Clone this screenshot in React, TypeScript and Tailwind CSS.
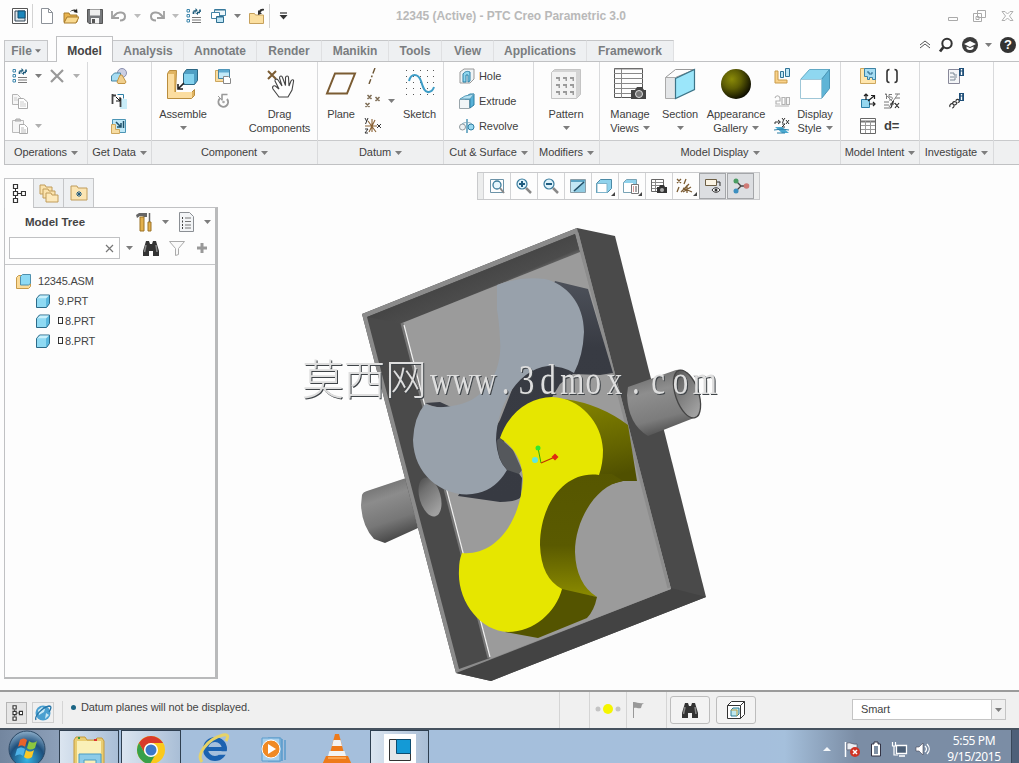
import type { ReactNode } from "react";

type IcoProps = { w?: number; h?: number; className?: string; children: ReactNode };

function Ico({ w = 16, h = 16, className = "", children }: IcoProps) {
  return (
    <svg width={w} height={h} viewBox={`0 0 ${w} ${h}`} fill="none" className={`shrink-0 ${className}`}>
      {children}
    </svg>
  );
}

function Arrow({ className = "" }: { className?: string }) {
  return (
    <svg width="7" height="4" viewBox="0 0 7 4" className={`shrink-0 ${className}`}>
      <path d="M0 0h7L3.5 4z" fill="#7d7d7d" />
    </svg>
  );
}

/* ---------- small icons ---------- */

const Regenerate = () => (
  <Ico>
    <path d="M1 1.500h2.500v2.500H1zM1 6.500h2.500v2.500H1zM1 11.500h2.500v2.500H1z" stroke="#3f87ad" />
    <path d="M6 9.500h9M6 12h9M6 14.500h9" stroke="#777" />
    <path d="M7.500 6V3.500M14 1.500V4M11 4.500h3M7.500 3h3" stroke="#1d5c7c" strokeWidth="1.700" />
    <path d="M9.500 0l3 3-3 3zM12 2l-3.500 2.500L12 7z" fill="#1d5c7c" />
  </Ico>
);

const NewFile = () => (
  <Ico>
    <path d="M2.500.5h7l4 4v11h-11z" fill="#fff" stroke="#8d9299" />
    <path d="M9.500.5v4h4" stroke="#8d9299" />
  </Ico>
);

const OpenFolder = () => (
  <Ico>
    <path d="M1 14V5h5l1 2h7v7z" fill="#e9b44f" stroke="#a77a2b" />
    <path d="M1 15l3-6h12l-3 6z" fill="#f9d98f" stroke="#a77a2b" />
    <path d="M7 4c1-2 4-3 6-2l1-1.500.5 4.500-4-1 1-1C10 2.500 8.500 3 7 4z" fill="#222" />
  </Ico>
);

const Save = () => (
  <Ico>
    <path d="M.5 1.500h15v14H2l-1.500-1.500z" fill="#77797c" stroke="#555" />
    <path d="M3 1.500h10v6H3z" fill="#eee" />
    <path d="M4 10h8v5.500H4z" fill="#f4f4f4" />
    <path d="M5 11h3v4H5z" fill="#555" />
  </Ico>
);

const Undo = ({ flip = false }: { flip?: boolean }) => (
  <Ico className={flip ? "-scale-x-100" : ""}>
    <path d="M4 7c3-4 10-3 10 1.500 0 3-2 4-5 4" stroke="#a0a0a0" strokeWidth="2" />
    <path d="M1 3v7h7" stroke="#a0a0a0" strokeWidth="1.800" />
    <path d="M1 10l4-4" stroke="#a0a0a0" strokeWidth="2" />
  </Ico>
);

const Windows = () => (
  <Ico>
    <path d="M4.500 1.500h11v6h-11z" fill="#eef7fb" stroke="#4384a6" />
    <path d="M1.500 4.500h8v6h-8z" fill="#fff" stroke="#4384a6" />
    <path d="M6.500 8.500h7v6h-7z" fill="#bfe5f5" stroke="#2e6e90" />
    <path d="M5 2h10M7 9h6" stroke="#2e6e90" />
  </Ico>
);

const CloseFolder = () => (
  <Ico>
    <path d="M.5 15.500V5.500h5l1 1.500h8v8.500z" fill="#fbdfa0" stroke="#c6a15d" />
    <path d="M15 1c-3-.5-4 .5-5 2l-1-1v5l4-1.500-1.500-1c1-1.500 2-2 3.500-2z" fill="#333" />
  </Ico>
);

const Copy = () => (
  <Ico>
    <path d="M.5 1.500h5l3 3v7h-8z" fill="#f6f6f6" stroke="#b5b5b5" />
    <path d="M6.500 5.500h5l4 3.500v6.500h-9z" fill="#fff" stroke="#aaa" />
    <path d="M8 9h4M8 11h6M8 13h6M2 5h3M2 7h4" stroke="#ccc" />
  </Ico>
);

const Paste = () => (
  <Ico>
    <path d="M.5 2.500h11v12H.5z" fill="#f6f6f6" stroke="#bbb" />
    <path d="M3 3l1-2h4l1 2z" fill="#ccc" stroke="#aaa" />
    <path d="M7.500 6.500h5l3 3v6h-8z" fill="#fff" stroke="#aaa" />
    <path d="M9 10h3M9 12h5M9 14h5" stroke="#bbb" />
  </Ico>
);

const Cross = () => (
  <Ico>
    <path d="M2 2l12 12M14 2L2 14" stroke="#999" strokeWidth="2.200" />
  </Ico>
);

const UserFeature = () => (
  <Ico>
    <circle cx="11" cy="5" r="4.500" fill="#ccd0e4" stroke="#8a8fae" />
    <path d="M.5 8l3-3h6v6l-2 2h-7z" fill="#a6dcf2" stroke="#4686a4" />
    <path d="M6 14l3-7h2l4 7-1 1.500H7z" fill="#f0cf8d" stroke="#c29544" />
  </Ico>
);

const CopyGeom = () => (
  <Ico>
    <path d="M9 6h7v10H9z" fill="#c9edf9" />
    <path d="M1.500 1v10M1 2.500h4M9.500 5v9" stroke="#444" strokeWidth="1.800" />
    <path d="M6.500 1.500h6v4" stroke="#2b7ea6" />
    <path d="M5 4l4 4M9 4v4H5" stroke="#111" />
  </Ico>
);

const Shrinkwrap = () => (
  <Ico>
    <path d="M1.500 1.500h13v13h-13z" fill="#bfe8f7" stroke="#4c95b5" />
    <path d="M5 4l5 5M10 5v4H6M12.500 3v7" stroke="#1f506a" strokeWidth="1.500" />
    <path d="M.5 6.500v9h8v-4h-4v-5z" fill="#f6dca2" stroke="#cda75e" />
  </Ico>
);

const CreateComp = () => (
  <Ico>
    <path d="M.5 2.500h3v8h7v3H.5z" fill="#f9dca0" stroke="#cda75e" />
    <path d="M3.500 1.500h11v9h-11z" fill="#c3e9f7" stroke="#4384a6" />
    <path d="M4 1.500h10v3H4z" fill="#5fabd0" />
    <path d="M8.500 8.500h5l2 2v5h-7z" fill="#fff" stroke="#888" />
  </Ico>
);

const Repeat = () => (
  <Ico>
    <path d="M5 5.500A4.800 4.800 0 1 0 12 6" stroke="#999" strokeWidth="2" />
    <path d="M6.500 1.500h6M7 1.500v6" stroke="#999" strokeWidth="1.600" />
    <path d="M7 7L3 3" stroke="#999" />
    <circle cx="8.500" cy="9" r="1.300" fill="#aaa" />
  </Ico>
);

const Axis = () => (
  <Ico>
    <path d="M11 0L5 16" stroke="#6b5433" strokeWidth="1.400" strokeDasharray="6 2 2 2" />
  </Ico>
);

const Points = () => (
  <Ico w={18}>
    <path d="M3.500 2l4 4M7.500 2l-4 4M11.500 4l4 4M15.500 4l-4 4M1.500 10l4 4M5.500 10l-4 4" stroke="#7b6a52" strokeWidth="1.500" />
  </Ico>
);

const Csys = () => (
  <Ico w={18}>
    <path d="M1 8h12M5 14l6-12M4 3l8 11M8 1v13" stroke="#8a6234" strokeWidth="1.100" />
    <path d="M1 0l1.500 3M4 0L1.500 6M1 11h3l-3 4h3M13 6l4 4M17 6l-4 4" stroke="#333" />
  </Ico>
);

const Hole = () => (
  <Ico>
    <path d="M1 4l4-3h10v10l-4 4H1z" fill="#eef3f5" stroke="#999" />
    <path d="M4 14V6c2-3 5-3 7-2v9l-2 1V7H7v7z" fill="#8fd6ee" stroke="#2a7fa5" />
  </Ico>
);

const Extrude = () => (
  <Ico>
    <path d="M.5 6.500h10v9H.5z" fill="#f1f5f7" stroke="#9aa5ab" />
    <path d="M6 4l5-3h4v11l-4 3V6H6z" fill="#58b2d8" stroke="#2d7ea3" />
    <path d="M1 6l5-3 9-2-4 5z" fill="#b7e2f2" stroke="#5c9fbd" />
  </Ico>
);

const Revolve = () => (
  <Ico>
    <circle cx="3.500" cy="9" r="3" fill="#edf1f3" stroke="#8e979c" />
    <circle cx="12" cy="9" r="3" fill="#9ad9f0" stroke="#2f7fa5" />
    <path d="M8 1v14" stroke="#3187ad" strokeWidth="1.300" />
    <path d="M3 6c2-2 8-2 10 0" stroke="#7fa6b8" />
  </Ico>
);

const ExplodeView = () => (
  <Ico>
    <path d="M1 3h3v9h9v3H1z" fill="#f9d28b" stroke="#c99b48" />
    <path d="M6.500 3.500h3v6h-3zM11.500.5h4v8h-4z" fill="#bfe6f5" stroke="#2f7396" />
  </Ico>
);

const SwitchExplode = () => (
  <Ico>
    <path d="M1 5c1-3 4-3 5 0v3H2v3h4M8 4.500h3v7H8zM12.500 4.500h3v7h-3zM1 13h14" stroke="#b4b4b4" strokeWidth="1.200" />
  </Ico>
);

const EditPosition = () => (
  <Ico>
    <path d="M1 6V4h5M4 2l2.500 2L4 6" stroke="#333" />
    <path d="M8 0l1.500 2L11 0M9.500 2L8.500 5M12 2l3 4M15 2l-3 4M8 6h3l-3 3h3" stroke="#333" />
    <path d="M1 9h7l7 6H8z" fill="#4ba9d0" />
    <path d="M0 12l8-1 7 1M3 15h8" stroke="#2b7ea6" strokeWidth="1.200" />
  </Ico>
);

const CompInterface = () => (
  <Ico>
    <path d="M.5.5h15v15H.5z" fill="#ffe6ad" stroke="#cda75e" />
    <path d="M4.500.5h11v11h-3v-2h-3v2h-2v-3h-3z" fill="#a5dcf2" stroke="#3d83a5" />
    <path d="M7 4h2v2h3V4" stroke="#26658a" />
  </Ico>
);

const Brackets = () => (
  <Ico>
    <path d="M5.500 1.500C3 1.500 3 3 3 4v8c0 1 0 2.500 2.500 2.500M10.500 1.500C13 1.500 13 3 13 4v8c0 1 0 2.500-2.500 2.500" stroke="#333" strokeWidth="1.600" />
  </Ico>
);

const PublishGeom = () => (
  <Ico>
    <path d="M1.500 6.500h8v8h-8z" fill="#95d7ef" stroke="#2b7ea6" />
    <path d="M6 7V1M4 3l2-2 2 2M8 8l6-5M11 2.500h3.500V6M9 11h6M13 9l2 2-2 2" stroke="#222" strokeWidth="1.200" />
  </Ico>
);

const Parameters = () => (
  <Ico>
    <path d="M1 1h1.500v5M8 1.500H5V4h2c2 0 2 3-1 3H5M11 1h5M11 5h5M0 9h5M0 12h5M0 15h6" stroke="#777" />
    <path d="M1 1l14 14M14 1L5 14" stroke="#888" />
    <path d="M6 15c3 0 1-7 4-7M6 11h4M11 10l4 5M15 10l-4 5" stroke="#333" strokeWidth="1.200" />
  </Ico>
);

const FamilyTable = () => (
  <Ico>
    <path d="M.5.5h15v15H.5z" fill="#fff" stroke="#666" />
    <path d="M1 3.500h14" stroke="#777" strokeWidth="2" />
    <path d="M1 7.500h14M1 11.500h14M5.500 3v12M10.500 3v12" stroke="#999" />
  </Ico>
);

const InfoReport = () => (
  <Ico>
    <path d="M.5 1.500h11v14H.5z" fill="#f3f5f7" stroke="#889" />
    <path d="M2 5h4v2h3M2 9h7M2 12h5v-2" stroke="#7a8894" />
    <path d="M11 0h5v8h-5z" fill="#1f4f78" />
    <path d="M13.500 1v1.500M13.500 3.500V7" stroke="#fff" strokeWidth="1.400" />
  </Ico>
);

const ChainInfo = () => (
  <Ico>
    <path d="M2 14c-1-2 1-4 3-3s1 4-1 4M5 11c-1-2 1-3 3-2s0 3-2 3M8 8c0-2 2-2 3-1s0 3-1 2" stroke="#333" strokeWidth="1.200" />
    <path d="M11 0h5v8h-5z" fill="#1f4f78" />
    <path d="M13.500 1v1.500M13.500 3.500V7" stroke="#fff" strokeWidth="1.400" />
  </Ico>
);

const TreeNodes = () => (
  <Ico w={15} h={19}>
    <path d="M2.500.5h4v4h-4zM2.500 7.500h4v4h-4zM2.500 14.500h4v4h-4zM10.500 7.500h4v4h-4z" fill="#fff" stroke="#333" strokeWidth="1.200" />
    <path d="M7 9.500h3M4.500 5v2M4.500 12v2" stroke="#333" />
  </Ico>
);

const Binoculars = () => (
  <Ico w={18} h={17}>
    <path d="M4 1h3l1 3h2l1-3h3l3 10v5h-6v-5H7v5H1v-5z" fill="#333" />
    <path d="M4 5l-1.500 7M14 5l1 7" stroke="#888" strokeWidth="1.500" />
  </Ico>
);

const Part = () => (
  <Ico w={14} h={14}>
    <path d="M.5 4.500l3-3.500h10v8.500l-3 4H.5z" fill="#5cb9de" stroke="#2c6a88" />
    <path d="M1 4.500h9v8.500H1z" fill="#8fdaf3" />
    <path d="M1 4.500L4 1.500h9l-3 3z" fill="#c9f0fb" />
  </Ico>
);

const Asm = () => (
  <Ico w={15} h={15}>
    <path d="M.5 3.500l2-2h4v8h8v3l-2 2H.5z" fill="#fbdb98" stroke="#c79a49" />
    <path d="M4.500 2.500l2-2h8v9l-2 1.500h-8z" fill="#8edaf4" stroke="#4f90ae" />
  </Ico>
);

/* ---------- large icons ---------- */

const AssembleIcon = () => (
  <Ico w={34} h={32}>
    <path d="M1.500 5.500l2-3h7l-1 22h16l3-3v6l-3 3h-24z" fill="#e0b462" stroke="#b98d3e" />
    <path d="M2 6h6v18h18v6H2z" fill="#fbdda0" />
    <path d="M17.500 5.500l3-4h11v11l-3 4h-11z" fill="#4f9fc4" stroke="#2b6683" />
    <path d="M18 6h10v10H18z" fill="#84d2ee" />
    <path d="M18 15l-6 6M12 16v5h5" stroke="#222" strokeWidth="1.600" />
  </Ico>
);

const HandIcon = () => (
  <Ico w={32} h={32}>
    <path d="M4 3l8 8M12 3l-8 8" stroke="#7b5c33" strokeWidth="2" />
    <path
      d="M15 29L9 21C7.500 18 10.500 17 12 18.500L15 21l-4-8c-.5-2 2-2.500 3-1l4 6-2.500-8c0-2.500 2.500-2.500 3-.5l3 8V9.500c.5-2 3-2 3 0l.5 8.500 2-5c1-2 3-1.500 2.500.5L28 22l-4 7z"
      fill="#fff"
      stroke="#444"
      strokeWidth="1.100"
    />
  </Ico>
);

const PlaneIcon = () => (
  <Ico w={32} h={32}>
    <path d="M10 5.500h20l-8 20H2z" stroke="#7b5c33" strokeWidth="2" />
  </Ico>
);

const SketchIcon = () => (
  <Ico w={32} h={32}>
    {[2, 8, 14, 20, 26].map((y) => (
      <path key={y} d={`M2 ${y}.5h1m6 0h1m6 0h1m6 0h1m5 0h1`} stroke="#555" />
    ))}
    <path d="M5 13c2-8 9-8 12 0 2 7 4 12 8 11 3-.5 4-2 5-5" stroke="#3d9cc6" strokeWidth="2" />
  </Ico>
);

const PatternIcon = () => (
  <Ico w={32} h={32}>
    <path d="M1.500 4.500l3-3h26v25l-4 4h-25z" fill="#d4d4d4" stroke="#c4c4c4" />
    <path d="M2 4h24v26H2z" fill="#f2f2f2" />
    {[9, 16, 23].map((y) =>
      [6, 13, 20].map((x) => <path key={`${x}-${y}`} d={`M${x} ${y}h4v4h-1.500v-2h-2.500z`} fill="#9a9a9a" />)
    )}
  </Ico>
);

const ManageIcon = () => (
  <Ico w={34} h={32}>
    <path d="M1.500.5h28v29h-28z" fill="#fdfdfd" stroke="#555" />
    <path d="M1 1h29M1 5.500h29M1 10.500h29M1 15.500h29M1 20.500h29M1 25.500h29M8.500 1v29" stroke="#888" />
    <path d="M18 22h4l2-3h5l2 3h2v9H18z" fill="#444" />
    <circle cx="26" cy="26" r="3.500" fill="#777" stroke="#ddd" />
  </Ico>
);

const SectionIcon = () => (
  <Ico w={32} h={32}>
    <path d="M1.500 9.500l10-8h19l-19 8z" fill="#fdfdfd" stroke="#999" />
    <path d="M1.500 9.500h10v21h-10z" fill="#e4e6e8" stroke="#aaa" />
    <path d="M11.500 10.500l19-9v20l-19 9z" fill="#9be6fa" stroke="#3c7488" strokeWidth="1.200" />
  </Ico>
);

const BallIcon = () => (
  <Ico w={32} h={32}>
    <defs>
      <radialGradient id="ball" cx="0.360" cy="0.340" r="0.700">
        <stop offset="0" stopColor="#8a8a08" />
        <stop offset="0.450" stopColor="#5e5e04" />
        <stop offset="1" stopColor="#0c0c00" />
      </radialGradient>
    </defs>
    <circle cx="16" cy="16" r="15" fill="url(#ball)" />
  </Ico>
);

const StyleIcon = () => (
  <Ico w={32} h={32}>
    <path d="M1.500 11.500l9-10h20l-8 10z" fill="#8fd7f0" stroke="#62aac6" />
    <path d="M22.500 11.500l8-10v19l-8 10z" fill="#5fb4d6" stroke="#4a97b8" />
    <path d="M1.500 11.500h21v19h-21z" fill="#fff" stroke="#9fc7d8" />
  </Ico>
);

/* ---------- ribbon ---------- */

function BigButton({ icon, lines, width, arrow }: { icon: ReactNode; lines: string[]; width: string; arrow?: "below" | "inline" }) {
  return (
    <div className={`flex shrink-0 flex-col items-center pt-[6px] ${width}`}>
      {icon}
      <div className="mt-[7px] text-center leading-[14px] whitespace-nowrap">
        {lines.map((line, i) => (
          <div key={line} className="flex items-center justify-center gap-1">
            <span>{line}</span>
            {arrow === "inline" && i === lines.length - 1 && <Arrow />}
          </div>
        ))}
      </div>
      {arrow === "below" && <Arrow className="mt-[5px]" />}
    </div>
  );
}

function Column({ children, className = "" }: { children: ReactNode; className?: string }) {
  return <div className={`flex shrink-0 flex-col pt-[1px] *:h-[25px] *:shrink-0 ${className}`}>{children}</div>;
}

function Cell({ children, className = "" }: { children?: ReactNode; className?: string }) {
  return <div className={`flex items-center ${className}`}>{children}</div>;
}

function Group({ label, width, children }: { label: string; width: string; children: ReactNode }) {
  return (
    <div className={`flex shrink-0 flex-col border-r border-[#d9dadc] ${width}`}>
      <div className="flex h-[78px]">{children}</div>
      <div className="flex h-[24px] items-center justify-center gap-1 border-t border-[#c9cacc] bg-[#eff0f1] whitespace-nowrap">
        <span>{label}</span>
        <Arrow />
      </div>
    </div>
  );
}

const tabs = [
  { name: "Analysis", width: "w-[71px]" },
  { name: "Annotate", width: "w-[73px]" },
  { name: "Render", width: "w-[65px]" },
  { name: "Manikin", width: "w-[67px]" },
  { name: "Tools", width: "w-[53px]" },
  { name: "View", width: "w-[52px]" },
  { name: "Applications", width: "w-[93px]" },
  { name: "Framework", width: "w-[87px]" },
];

function TitleBar() {
  return (
    <div className="flex h-[36px] items-start">
      <div className="flex h-[32px] w-[380px] shrink-0 items-center pl-[12px]">
        <Ico>
          <path d="M.5.5h15v15H.5z" fill="#fff" stroke="#555" />
          <path d="M3 3h10v10H3z" fill="#d9e3e9" stroke="#345" />
          <path d="M6 3h7v7H6z" fill="#1b86bb" stroke="#124e70" />
        </Ico>
        <div className="ml-[4px] h-[24px] w-px bg-[#d3d3d3]" />
        <div className="ml-[6px] flex items-center gap-[8px]">
          <NewFile />
          <OpenFolder />
          <Save />
          <Undo />
        </div>
        <Arrow className="ml-[7px] opacity-50" />
        <div className="ml-[8px] flex items-center">
          <Undo flip />
          <Arrow className="ml-[7px] opacity-50" />
          <div className="ml-[7px]"><Regenerate /></div>
          <div className="ml-[8px]"><Windows /></div>
        </div>
        <Arrow className="ml-[8px]" />
        <div className="ml-[8px]"><CloseFolder /></div>
        <div className="ml-[4px] h-[24px] w-px bg-[#d3d3d3]" />
        <Ico w={9} h={8} className="ml-[9px]">
          <path d="M1 1h7" stroke="#333" strokeWidth="1.200" />
          <path d="M.5 3h8L4.500 7.500z" fill="#333" />
        </Ico>
      </div>
      <div className="flex h-[32px] w-[262px] items-center justify-center text-[12px] font-bold tracking-[-0.04px] text-[#b9b9b9] whitespace-nowrap">
        12345 (Active) - PTC Creo Parametric 3.0
      </div>
      <div className="ml-auto flex h-[32px] items-center gap-[15px] pr-[5px]">
        <Ico w={10} h={12}><path d="M.5 7.500h9v3h-9z" stroke="#aaa" /></Ico>
        <Ico w={13} h={12}>
          <path d="M4.500.5h8v7h-8zM.5 3.500h8v8h-8z" fill="#fff" stroke="#aaa" />
          <path d="M3 6.500h3v3H3z" stroke="#aaa" />
        </Ico>
        <Ico w={13} h={12}>
          <path d="M1 1.500h3l2.500 2.500L9 1.500h3L8.500 6l3.500 4.500H9L6.500 8 4 10.500H1L4.500 6z" stroke="#b0b0b0" />
        </Ico>
      </div>
    </div>
  );
}

function TabStrip() {
  return (
    <div className="flex h-[25px] items-end pl-[4px] text-[12px] font-bold text-[#7a7d80]">
      <div className="flex h-[21px] w-[44px] items-center justify-center gap-[3px] border border-b-0 border-[#c5c6c8] bg-[#eef0f2]">
        <span>File</span>
        <svg width="6" height="4" viewBox="0 0 7 4">
          <path d="M0 0h7L3.500 4z" fill="#777" />
        </svg>
      </div>
      <div className="z-10 ml-[8px] -mb-px flex h-[26px] w-[57px] items-center justify-center border border-b-0 border-[#c0c1c3] bg-[#fdfdfd] pt-[3px] text-[#444]">
        Model
      </div>
      {tabs.map((tab) => (
        <div
          key={tab.name}
          className={`flex h-[21px] items-center justify-center border-t border-r border-t-[#c5c6c8] border-r-[#dfe0e2] bg-[#eef0f2] ${tab.width}`}
        >
          {tab.name}
        </div>
      ))}
      <div className="ml-auto flex h-[33px] items-center pr-[3px]">
        <Ico w={12} h={9}><path d="M1 5l5-4 5 4M1 8l5-4 5 4" stroke="#555" /></Ico>
        <Ico className="ml-[7px]">
          <circle cx="9" cy="6.500" r="4.700" stroke="#333" strokeWidth="2" />
          <path d="M5.500 10L2 14.500" stroke="#333" strokeWidth="2.800" />
        </Ico>
        <Ico className="ml-[8px]">
          <circle cx="8" cy="8" r="8" fill="#3b3b3b" />
          <path d="M2 7l6-3 6 3-6 3zM4.500 9.500v2c2 2 5 2 7 0v-2L8 11z" fill="#fff" />
        </Ico>
        <Arrow className="ml-[7px]" />
        <div className="ml-[8px] flex h-[16px] w-[16px] items-center justify-center rounded-full bg-[#333] text-[13px] leading-none font-bold text-white">?</div>
      </div>
    </div>
  );
}

function Ribbon() {
  return (
    <div className="ml-[4px] flex h-[104px] border-y border-l border-[#c0c1c3] text-[11px] tracking-[-0.08px] text-[#3f3f3f]">
      <Group label="Operations" width="w-[83px]">
        <Column className="pl-[7px]">
          <Cell>
            <Regenerate />
            <Arrow className="ml-[7px]" />
            <div className="ml-[7px]"><Cross /></div>
            <Arrow className="ml-[8px] opacity-60" />
          </Cell>
          <Cell><Copy /></Cell>
          <Cell><Paste /><Arrow className="ml-[7px] opacity-60" /></Cell>
        </Column>
      </Group>
      <Group label="Get Data" width="w-[64px]">
        <Column className="pl-[23px]">
          <Cell><UserFeature /></Cell>
          <Cell><CopyGeom /></Cell>
          <Cell><Shrinkwrap /></Cell>
        </Column>
      </Group>
      <Group label="Component" width="w-[166px]">
        <BigButton icon={<AssembleIcon />} lines={["Assemble"]} width="w-[62px]" arrow="below" />
        <Column className="ml-[1px]">
          <Cell><CreateComp /></Cell>
          <Cell><Repeat /></Cell>
        </Column>
        <div className="mt-[6px] ml-[9px] h-[54px] w-px bg-[#dcdcdc]" />
        <BigButton icon={<HandIcon />} lines={["Drag", "Components"]} width="w-[79px]" />
      </Group>
      <Group label="Datum" width="w-[126px]">
        <BigButton icon={<PlaneIcon />} lines={["Plane"]} width="w-[46px]" />
        <Column className="w-[18px]">
          <Cell><Axis /></Cell>
          <Cell><Points /></Cell>
          <Cell><Csys /></Cell>
        </Column>
        <Arrow className="mt-[37px] ml-[6px]" />
        <BigButton icon={<SketchIcon />} lines={["Sketch"]} width="w-[49px]" />
      </Group>
      <Group label="Cut & Surface" width="w-[90px]">
        <Column className="pl-[15px] *:pt-[1px]">
          <Cell className="gap-[4px]"><Hole />Hole</Cell>
          <Cell className="gap-[4px]"><Extrude />Extrude</Cell>
          <Cell className="gap-[4px]"><Revolve />Revolve</Cell>
        </Column>
      </Group>
      <Group label="Modifiers" width="w-[66px]">
        <BigButton icon={<PatternIcon />} lines={["Pattern"]} width="w-[64px]" arrow="below" />
      </Group>
      <Group label="Model Display" width="w-[241px]">
        <BigButton icon={<ManageIcon />} lines={["Manage", "Views"]} width="w-[60px]" arrow="inline" />
        <BigButton icon={<SectionIcon />} lines={["Section"]} width="w-[40px]" arrow="below" />
        <BigButton icon={<BallIcon />} lines={["Appearance", "Gallery"]} width="w-[72px]" arrow="inline" />
        <Column className="ml-[2px]">
          <Cell><ExplodeView /></Cell>
          <Cell><SwitchExplode /></Cell>
          <Cell><EditPosition /></Cell>
        </Column>
        <BigButton icon={<StyleIcon />} lines={["Display", "Style"]} width="w-[50px]" arrow="inline" />
      </Group>
      <Group label="Model Intent" width="w-[79px]">
        <Column className="ml-[19px]">
          <Cell><CompInterface /></Cell>
          <Cell><PublishGeom /></Cell>
          <Cell><FamilyTable /></Cell>
        </Column>
        <Column className="ml-[8px]">
          <Cell><Brackets /></Cell>
          <Cell><Parameters /></Cell>
          <Cell className="text-[13px] font-bold">d=</Cell>
        </Column>
      </Group>
      <Group label="Investigate" width="w-[74px]">
        <Column className="ml-[28px]">
          <Cell><InfoReport /></Cell>
          <Cell><ChainInfo /></Cell>
        </Column>
      </Group>
      <div className="flex flex-1 flex-col justify-end">
        <div className="h-[24px] border-t border-[#c9cacc] bg-[#eff0f1]" />
      </div>
    </div>
  );
}

/* ---------- model tree ---------- */

const parts = [
  { name: "9.PRT", placed: true },
  { name: "8.PRT", placed: false },
  { name: "8.PRT", placed: false },
];

function ModelTree() {
  return (
    <div className="flex w-[218px] shrink-0 flex-col pt-[13px] pl-[4px] text-[11px] text-[#444]">
      <div className="flex h-[29px]">
        <div className="z-10 -mb-px flex w-[30px] items-center justify-center border border-b-0 border-[#c5c6c8] bg-[#fdfdfd] pr-[2px]">
          <TreeNodes />
        </div>
        <div className="flex w-[30px] items-center justify-center border-t border-r border-[#c5c6c8] bg-[#eef0f2]">
          <Ico w={20} h={20}>
            <path d="M1 2h5l1 2h6v7H1z" fill="#fbe3ad" stroke="#c09c5a" />
            <path d="M4 6h5l1 2h6v7H4z" fill="#fbe3ad" stroke="#c09c5a" />
            <path d="M7 10h5l1 2h6v7H7z" fill="#fde9bb" stroke="#c09c5a" />
          </Ico>
        </div>
        <div className="flex w-[30px] items-center justify-center border-t border-r border-[#c5c6c8] bg-[#eef0f2]">
          <Ico w={18} h={16}>
            <path d="M1 1h6l1 2h9v12H1z" fill="#fbe5b3" stroke="#c09c5a" />
            <path d="M9 6v6M6 9h6M7 7l4 4M11 7l-4 4" stroke="#1f5a80" />
          </Ico>
        </div>
      </div>
      <div className="flex h-[472px] w-[214px] flex-col border border-r-[3px] border-b-2 border-[#c0c1c3] border-r-[#b9babb] border-b-[#b9babb]">
        <div className="flex h-[28px] items-center pl-[20px]">
          <span className="w-[110px] pt-[1px] text-[11.500px] font-bold">Model Tree</span>
          <Ico w={18} h={20}>
            <path d="M1 3l3-2h8v4H9L7 4H5L2 6z" fill="#666" />
            <path d="M5 5h4v14H5z" fill="#e3b04c" stroke="#9b7326" />
            <path d="M14.500 1v9" stroke="#666" strokeWidth="1.500" />
            <path d="M13 10h3v9h-3z" fill="#e3b04c" stroke="#9b7326" />
          </Ico>
          <Arrow className="ml-[9px]" />
          <Ico w={17} h={20} className="ml-[9px]">
            <path d="M1.500.5h10l4 4v15h-14z" fill="#f3f5f7" stroke="#8b8f94" />
            <path d="M4 6h1M4 9.500h1M4 13h1M4 16h1" stroke="#444" strokeWidth="2" />
            <path d="M7 6h6M7 9.500h6M7 13h6M7 16h6" stroke="#777" />
          </Ico>
          <Arrow className="ml-[9px]" />
        </div>
        <div className="flex h-[29px] items-start border-b border-[#c5c6c8] pt-[1px] pl-[4px]">
          <div className="flex h-[22px] w-[111px] items-center justify-end border border-[#c0c1c3] bg-white pr-[5px]">
            <Ico w={9} h={9}><path d="M1 1l7 7M8 1L1 8" stroke="#777" strokeWidth="1.200" /></Ico>
          </div>
          <div className="ml-[6px] flex h-[22px] items-center">
            <Arrow />
            <div className="ml-[9px]"><Binoculars /></div>
            <Ico className="ml-[9px]">
              <path d="M.5 1.500h15l-6 7v6l-3 1v-7z" fill="#fafafa" stroke="#aaa" />
            </Ico>
            <Ico w={12} h={12} className="ml-[11px]">
              <path d="M6 1v10M1 6h10" stroke="#999" strokeWidth="3" />
            </Ico>
          </div>
        </div>
        <div className="flex flex-col pt-[6px] tracking-[-0.2px]">
          <div className="flex h-[20px] items-center pl-[11px]">
            <Asm />
            <span className="ml-[7px]">12345.ASM</span>
          </div>
          {parts.map((part, i) => (
            <div key={i} className="flex h-[20px] items-center pl-[31px]">
              <Part />
              {!part.placed && <span className="ml-[8px] -mt-[2px] h-[7px] w-[5px] border border-[#333]" />}
              <span className={part.placed ? "ml-[8px]" : "ml-[2px]"}>{part.name}</span>
            </div>
          ))}
        </div>
      </div>
    </div>
  );
}

/* ---------- graphics area ---------- */

const viewTools: { icon: ReactNode; active?: boolean; menu?: boolean }[] = [
  {
    icon: (
      <Ico>
        <path d="M1.500 1.500h13v13h-13z" stroke="#6c93a8" />
        <circle cx="8" cy="7" r="4" fill="#e7f6fc" stroke="#3c7c9c" strokeWidth="1.300" />
        <path d="M11 10l4 5" stroke="#888" strokeWidth="2" />
      </Ico>
    ),
  },
  {
    icon: (
      <Ico>
        <circle cx="6" cy="6" r="5" fill="#dff3fb" stroke="#3a7c9e" strokeWidth="1.200" />
        <path d="M3 6h6M6 3v6" stroke="#1f5c80" strokeWidth="2" />
        <path d="M10 10l5 5" stroke="#888" strokeWidth="2.500" />
      </Ico>
    ),
  },
  {
    icon: (
      <Ico>
        <circle cx="6" cy="6" r="5" fill="#dff3fb" stroke="#3a7c9e" strokeWidth="1.200" />
        <path d="M3 6h6" stroke="#1f5c80" strokeWidth="2" />
        <path d="M10 10l5 5" stroke="#888" strokeWidth="2.500" />
      </Ico>
    ),
  },
  {
    icon: (
      <Ico>
        <path d="M.5 1.500h15v13H.5z" fill="#c4e8f5" stroke="#8b9fa9" />
        <path d="M1 2h14v2H1z" fill="#5da5c4" />
        <path d="M3 14L15 3v11z" fill="#8fcbe2" />
        <path d="M4 13l10-9" stroke="#234f66" strokeWidth="1.600" />
      </Ico>
    ),
  },
  {
    menu: true,
    icon: (
      <Ico>
        <path d="M.5 5.500l4-4h11v9l-4 4H.5z" fill="#8fd2ec" stroke="#4c8aa6" />
        <path d="M1 5.500h10v9H1z" fill="#fff" stroke="#7fb4cb" />
      </Ico>
    ),
  },
  {
    menu: true,
    icon: (
      <Ico>
        <path d="M.5 4.500l3-3h10v10l-3 3H.5z" fill="#8fd2ec" stroke="#78a3b5" />
        <path d="M1 5h9v9H1z" fill="#fff" />
        <path d="M8.500 6.500h7v9h-7z" fill="#fff" stroke="#777" />
        <path d="M10 9h1M10 11h1M10 13h1" stroke="#b33" />
        <path d="M12 9h2M12 11h2M12 13h2" stroke="#555" />
      </Ico>
    ),
  },
  {
    icon: (
      <Ico>
        <path d="M.5 1.500h12v12H.5z" fill="#fff" stroke="#666" />
        <path d="M1 4.500h11M1 7.500h11M1 10.500h11M4.500 2v11" stroke="#888" />
        <path d="M6 9h2l1-2h4l1 2h2v6H6z" fill="#333" />
        <circle cx="11" cy="12" r="2" fill="#aaa" />
      </Ico>
    ),
  },
  {
    menu: true,
    icon: (
      <Ico w={18}>
        <path d="M1 1l4 4M5 1L1 5M10 1L8 6M3 9L1 14M5 14l8-8M11 7v8M7 10l9 4M7 14l8-5" stroke="#7b5c33" strokeWidth="1.300" />
      </Ico>
    ),
  },
  {
    active: true,
    icon: (
      <Ico w={18}>
        <path d="M1.500 1.500h11v6h-11z" fill="#fbf4e4" stroke="#6d5f45" />
        <path d="M13 4h3v4" stroke="#333" />
        <path d="M8 12c2-3 6-3 8 0-2 3-6 3-8 0z" fill="#fff" stroke="#333" />
        <circle cx="12" cy="12" r="1.500" fill="#333" />
      </Ico>
    ),
  },
  {
    active: true,
    icon: (
      <Ico w={18}>
        <path d="M4 3l5 5h6M9 8l-5 5" stroke="#444" strokeWidth="1.300" />
        <circle cx="4" cy="3" r="2.500" fill="#4a9c62" />
        <circle cx="14.500" cy="8" r="2.800" fill="#cf7a75" />
        <circle cx="4" cy="13" r="2.500" fill="#3c8fc0" />
      </Ico>
    ),
  },
];

function ViewToolbar() {
  return (
    <div className="absolute top-[7px] left-[259px] flex h-[28px] border border-[#c9cacc] bg-[#eceded]">
      <div className="w-[5px]" />
      {viewTools.map((tool, i) => (
        <div
          key={i}
          className={`flex w-[27px] items-center justify-center border-l ${
            tool.active ? "mr-px border border-[#a4a6a9] bg-[#dcdee1]" : "border-[#d2d3d5] bg-[#fdfdfd]"
          }`}
        >
          {tool.icon}
          {tool.menu && (
            <svg width="4" height="4" viewBox="0 0 4 4" className="-ml-[1px] mb-[3px] shrink-0 self-end">
              <path d="M4 0v4H0z" fill="#444" />
            </svg>
          )}
        </div>
      ))}
      <div className="w-[4px]" />
    </div>
  );
}

function Model() {
  return (
    <svg width="801" height="525" viewBox="218 165 801 525" className="block">
      <defs>
        <linearGradient id="pegL" x1="0.350" y1="0" x2="0.650" y2="1">
          <stop offset="0" stopColor="#6c6c6c" />
          <stop offset="0.300" stopColor="#8c8c8c" />
          <stop offset="0.650" stopColor="#777" />
          <stop offset="1" stopColor="#3e3e3e" />
        </linearGradient>
        <linearGradient id="pegR" x1="0.350" y1="0" x2="0.650" y2="1">
          <stop offset="0" stopColor="#6c6c6c" />
          <stop offset="0.300" stopColor="#8e8e8e" />
          <stop offset="0.700" stopColor="#7c7c7c" />
          <stop offset="1" stopColor="#444" />
        </linearGradient>
        <linearGradient id="bore" x1="0" y1="0" x2="0.300" y2="1">
          <stop offset="0" stopColor="#484848" />
          <stop offset="0.350" stopColor="#707070" />
          <stop offset="1" stopColor="#a0a0a0" />
        </linearGradient>
        <linearGradient id="waist" x1="0" y1="0" x2="0" y2="1">
          <stop offset="0" stopColor="#565600" />
          <stop offset="0.600" stopColor="#5a5a00" />
          <stop offset="1" stopColor="#8b8b00" />
        </linearGradient>
        <linearGradient id="lobe" x1="0" y1="0" x2="0.200" y2="1">
          <stop offset="0" stopColor="#858500" />
          <stop offset="0.700" stopColor="#626200" />
          <stop offset="1" stopColor="#505000" />
        </linearGradient>
        <linearGradient id="topWall" gradientUnits="userSpaceOnUse" x1="478" y1="270" x2="490" y2="298">
          <stop offset="0" stopColor="#454545" />
          <stop offset="0.650" stopColor="#4c4c4c" />
          <stop offset="1" stopColor="#8a8a8a" />
        </linearGradient>
        <linearGradient id="blueSide" x1="0" y1="0" x2="0" y2="1">
          <stop offset="0" stopColor="#4d515a" />
          <stop offset="0.300" stopColor="#383b43" />
          <stop offset="1" stopColor="#373a42" />
        </linearGradient>
      </defs>

      {/* left shaft */}
      <path d="M362 495Q363 492 367 491L406 478 418 528 385 543 374 539Q362 526 361 505z" fill="url(#pegL)" />

      {/* housing */}
      <path d="M362 314L577 228 615 236 706 597 491 681 456 673z" fill="#4a4a4a" />
      <path d="M456 673L671 588 706 597 491 681z" fill="#434343" />
      <path d="M362 314L577 228 671 589 456 673z" fill="#8b8b8b" />
      <path d="M367 317L575 234 580 253 402 323 490 658 459 669z" fill="#4a4a4a" />
      <path d="M367 317L575 234 580 253 402 324z" fill="url(#topWall)" />
      <path d="M402 323L580 252 671 589 490 659z" fill="#9b9b9b" />
      <path d="M577 233L669 588" stroke="#8d8d8d" strokeWidth="3" />
      <path d="M402 323L489 658" stroke="#777" strokeWidth="3" />
      <path d="M404 325L490 657" stroke="#f2f2f2" strokeWidth="1.200" />
      <ellipse cx="430" cy="497" rx="10.500" ry="20" transform="rotate(-16 430 497)" fill="url(#bore)" />

      {/* grey rotor */}
      <path d="M555 281L588 289 613 373 600 375 573 374 560 384 548 404 500 445 522 478 521 497Q516 502 500 502L458 496 500 420z" fill="url(#blueSide)" />
      <path d="M425 403Q437 409 451 407L440 402z" fill="#3c3f47" />
      <path
        d="M497 285Q520 276 545 279C566 284 584 303 584 332Q583 356 574 373Q563 366 548 366C520 369 497 402 496 440Q497 460 507 470Q496 489 478 493C450 500 414 480 413 440Q414 417 425 404Q436 409 452 406C482 403 503 375 500 340Q499 320 497 310z"
        fill="#98a1ab"
      />
      <path d="M500 438L513 450 522 470 519 474 507 470Q497 460 497 440z" fill="#55585c" />

      {/* yellow rotor */}
      <path d="M565 399Q600 404 628 425L637 481 623 481 612 484 590 474z" fill="url(#lobe)" />
      <path d="M600 474L612 474 623 481C596 485 575 520 575 552Q576 584 597 597L560 591 530 570 530 490 575 468z" fill="url(#waist)" />
      <path d="M562 589L597 597Q594 611 587 618L538 638 505 632 548 600z" fill="#545400" />
      <path
        d="M500 438C508 413 530 397 552 397C580 398 602 422 603 450Q603 464 599 475C566 470 540 503 540 545Q541 578 562 589C556 612 534 632 508 632C480 631 457 601 459 570Q459 560 462 553C496 556 520 522 523 480Q522 452 500 438z"
        fill="#e6e600"
      />

      {/* right shaft */}
      <path d="M628 387L676 370Q690 368 698 388L701 404 699 416 648 436Q628 424 627 395z" fill="url(#pegR)" />
      <ellipse cx="687" cy="394" rx="11.500" ry="25" transform="rotate(-19 687 394)" fill="url(#bore)" stroke="#444" strokeWidth="1.300" />

      {/* spin centre */}
      <path d="M541 463L538 448" stroke="#35b000" />
      <path d="M541 463L555 457" stroke="#c03000" strokeWidth="1.300" />
      <circle cx="538" cy="448" r="2.500" fill="#2fe82f" />
      <path d="M555 453.500l3.500 3.500-3.500 3.500-3.500-3.500z" fill="#e02a10" />
      <circle cx="535" cy="460" r="3" fill="#5fe6dc" />

      <g fill="#dedede" className="[filter:drop-shadow(1px_1px_0_#3f4448)]">
        <text x="302" y="395" fontSize="42" textLength="125" className="font-['Noto_Sans_CJK_SC',sans-serif] font-light">莫西网</text>
        <g transform="translate(430 0) scale(0.740 1)">
          <text
            y="394"
            fontSize="42"
            x="0 29.700 59.500 97 112 120 149 176 210 239 273 287 299 328 355"
            className="font-['Liberation_Serif',serif] whitespace-pre"
          >
            {"www. 3dmox. com"}
          </text>
        </g>
      </g>
    </svg>
  );
}

/* ---------- bottom bars ---------- */

function StatusBar() {
  return (
    <div className="flex h-[38px] shrink-0 border-t-2 border-[#9b9b9b] bg-[#f0f0f0] text-[11px] tracking-[-0.1px] text-[#444]">
      <div className="mt-[10px] ml-[6px] flex h-[22px] w-[21px] items-center justify-center border border-[#b5b5b5] bg-[#e6e6e6]">
        <svg width="12" height="16" viewBox="0 0 15 19" fill="none">
          <path d="M2.500.5h4v4h-4zM2.500 7.500h4v4h-4zM2.500 14.500h4v4h-4zM10.500 7.500h4v4h-4z" fill="#fff" stroke="#333" strokeWidth="1.400" />
          <path d="M7 9.500h3M4.500 5v2M4.500 12v2" stroke="#333" />
        </svg>
      </div>
      <div className="mt-[10px] ml-[5px] flex h-[21px] w-[22px] items-center justify-center border border-[#cfcfcf]">
        <Ico w={18} h={18}>
          <circle cx="9" cy="9" r="7.500" fill="#4a9fd0" />
          <path d="M4 6l4-3 3 2-1 3-5 3zM12 9l3 2-4 4z" fill="#c5e7f5" />
          <path d="M2 16C0 12 9 3 15 2c3 0 2 3 0 6" stroke="#2776a8" strokeWidth="1.300" />
        </Ico>
      </div>
      <div className="mt-[9px] ml-[8px] h-[23px] w-px bg-[#d5d5d5]" />
      <div className="flex h-[31px] items-center">
        <span className="ml-[8px] h-[5px] w-[5px] rounded-full bg-[#1b6585]" />
        <span className="ml-[5px] whitespace-nowrap">Datum planes will not be displayed.</span>
      </div>
      <div className="ml-auto flex h-[36px] items-stretch">
        <div className="w-[30px] border-l border-[#d5d5d5]" />
        <div className="flex w-[37px] items-center justify-center border-l border-[#d5d5d5]">
          <Ico w={26} h={12}>
            <circle cx="3" cy="5" r="2.500" fill="#c4c4c4" />
            <circle cx="23" cy="5" r="2.500" fill="#c4c4c4" />
            <circle cx="13" cy="5" r="5" fill="#f5f500" />
          </Ico>
        </div>
        <div className="flex w-[41px] items-center border-x border-[#d5d5d5] pl-[5px]">
          <Ico w={13} h={16}>
            <path d="M1.500 0v16" stroke="#999" />
            <path d="M2 0c3 0 5 2 10 1-3 2-2 3-3 5-3 1-5-1-7 0z" fill="#999" />
          </Ico>
        </div>
        <div className="mt-[4px] ml-[3px] flex h-[28px] w-[40px] items-center justify-center rounded-[3px] border border-[#bdbdbd] bg-[#f3f3f3]">
          <Binoculars />
        </div>
        <div className="mt-[4px] ml-[6px] flex h-[28px] w-[40px] items-center justify-center rounded-[3px] border border-[#bdbdbd] bg-[#f3f3f3]">
          <Ico w={18} h={18}>
            <path d="M.5 4.500l4-4h13v13l-4 4H.5z" fill="#fff" stroke="#333" />
            <path d="M.5 4.500h13v13M13.500 4.500l4-4" stroke="#333" />
            <path d="M4 9l2-2h6v6l-2 2H4z" fill="#bfe8ee" stroke="#2c7c96" />
            <path d="M4 9h6v6" stroke="#c0a040" />
          </Ico>
        </div>
        <div className="mt-[7px] mr-[13px] ml-[96px] flex h-[21px] w-[154px] items-center border border-[#c4c4c4] bg-white pl-[8px]">
          <span>Smart</span>
          <div className="ml-auto flex h-full w-[14px] items-center justify-center border-l border-[#c4c4c4] bg-[#f0f0f0]">
            <Arrow />
          </div>
        </div>
      </div>
    </div>
  );
}

const taskButton = "flex shrink-0 justify-center overflow-hidden";
const taskOpen = "border border-b-0 border-[#2f3f50] bg-linear-to-r from-[#dbe5f0] to-[#a9bed6]";

function Taskbar() {
  return (
    <div className="flex h-[35px] shrink-0 overflow-hidden border-t-2 border-[#46525f] bg-linear-to-r from-[#a5bfdc] from-75% via-[#a5c0dc] via-77% to-[#7b8da5] to-84%">
      <div className="flex h-[33px] w-[59px] items-start bg-linear-to-r from-[#73869f] to-[#8da0b9] pl-[8px]">
        <Ico w={38} h={38}>
          <defs>
            <radialGradient id="orb" cx="0.500" cy="0.800" r="0.800">
              <stop offset="0" stopColor="#35b5e6" />
              <stop offset="0.600" stopColor="#1d4f7c" />
              <stop offset="1" stopColor="#8fb0cb" />
            </radialGradient>
          </defs>
          <circle cx="19" cy="19" r="18" fill="url(#orb)" stroke="#2b4865" />
          <path d="M12 10c3-2 5-2 7 0l-2 7c-2-2-5-2-7 0z" fill="#e8632b" />
          <path d="M21 11c3 2 5 2 8 0l-2 7c-3 2-6 2-8 0z" fill="#8cc63f" />
          <path d="M9 19c3-2 5-2 8 0l-2 7c-2-2-5-2-8 0z" fill="#4fb3e8" />
          <path d="M18 20c3 2 5 2 8 0l-2 7c-3 2-5 2-8 0z" fill="#fbc926" />
        </Ico>
      </div>
      <div className={`${taskButton} ${taskOpen} w-[60px] pt-[4px]`}>
        <Ico w={34} h={34}>
          <path d="M2 5l2-3h9l2 3h8l2-2h5l2 3v27H2z" fill="#e9cd72" stroke="#c49a3c" />
          <path d="M5 6h24v22H5z" fill="#faf0b8" />
          <path d="M6 3h2" stroke="#3a9c3a" strokeWidth="2" />
          <path d="M22 5h3" stroke="#d33" strokeWidth="2" />
          <path d="M7 19h22v14h-5v-8H12v8H7z" fill="#8ccbe8" stroke="#4a9cc4" />
        </Ico>
      </div>
      <div className={`${taskButton} ${taskOpen} ml-[2px] w-[60px] pt-[4px]`}>
        <Ico w={30} h={30}>
          <circle cx="15" cy="15" r="14" fill="#fbc91b" />
          <path d="M2.900 8A14 14 0 0 1 27.100 8H15a7 7 0 0 0-6 10.500z" fill="#d93a2b" />
          <path d="M2.900 8A14 14 0 0 0 14 29l6-10.500H9z" fill="#37a04a" />
          <circle cx="15" cy="15" r="7" fill="#fff" />
          <circle cx="15" cy="15" r="5.500" fill="#3c78c8" />
        </Ico>
      </div>
      <div className={`${taskButton} w-[66px] pt-[3px]`}>
        <Ico w={32} h={32}>
          <circle cx="17" cy="16" r="9.500" stroke="#1b62b0" strokeWidth="5" />
          <path d="M8 16h19" stroke="#1b62b0" strokeWidth="4" />
          <path d="M21 20h8" stroke="#a6c0dc" strokeWidth="3.500" />
          <path d="M4 29C-2 22 9 6 25 2c5-1 6 1 3 6" stroke="#e6d268" strokeWidth="3" />
        </Ico>
      </div>
      <div className={`${taskButton} w-[54px] pt-[7px]`}>
        <Ico w={28} h={26}>
          <path d="M8 1h13v23H8z" fill="#cfe3f3" stroke="#5a9ccc" />
          <path d="M22 2v22M25 3v20" stroke="#5a9ccc" strokeWidth="1.500" />
          <path d="M2 1h18v23H2z" fill="#a9d0ec" stroke="#5a9ccc" />
          <circle cx="11" cy="12" r="9" fill="#f08a24" stroke="#fff" />
          <path d="M8 7l8 5-8 5z" fill="#fff" />
        </Ico>
      </div>
      <div className={`${taskButton} w-[70px] pt-[3px] pl-[2px]`}>
        <Ico w={30} h={32}>
          <path d="M13 1h4l6.500 25h-17z" fill="#ee7a1a" />
          <path d="M11.500 7h7l1.500 6H10zM7.500 18h15l1.500 5H6z" fill="#f3f3f3" />
          <path d="M4 23h22l4 9H0z" fill="#ee7a1a" />
          <path d="M6 24h18v2H6z" fill="#f9a450" />
        </Ico>
      </div>
      <div className={`${taskButton} ${taskOpen} -ml-px w-[59px] pt-[3px]`}>
        <Ico w={32} h={32}>
          <path d="M0 0h32v32H0z" fill="#fff" />
          <path d="M5.500 5.500h21v21h-21z" fill="#e4e7ea" stroke="#333" />
          <path d="M12.500 5.500h14v14h-14z" fill="#149ad6" stroke="#0c4c70" />
        </Ico>
      </div>
      <div className="ml-auto flex h-[38px] items-center">
        <Ico w={8} h={4}><path d="M4 0l4 4H0z" fill="#f3f6f9" /></Ico>
        <Ico className="ml-[13px]">
          <path d="M1.500 1v15" stroke="#fff" strokeWidth="1.500" />
          <path d="M3 2c4-1 6 2 10 1v6c-4 1-6-1-10 0z" fill="#e9edf2" stroke="#445" strokeWidth=".6" />
          <circle cx="11" cy="11" r="5" fill="#cf3324" />
          <path d="M9 9l4 4M13 9l-4 4" stroke="#fff" strokeWidth="1.500" />
        </Ico>
        <Ico w={12} className="ml-[10px]">
          <path d="M4 1h4v2h2.500v12h-9V3H4z" fill="#fff" stroke="#334" />
          <path d="M4 5h4v8H4z" fill="#7f90a4" />
        </Ico>
        <Ico w={17} className="ml-[9px]">
          <path d="M5.500 4.500h10v8h-10zM8 15h6" fill="#4c5f76" stroke="#fff" strokeWidth="1.300" />
          <path d="M1.500 1v4h3V1M3 5v9h4" stroke="#fff" strokeWidth="1.200" />
        </Ico>
        <Ico w={17} className="ml-[7px]">
          <path d="M1 6h3l4-4v12l-4-4H1z" fill="#fff" stroke="#445" strokeWidth=".6" />
          <path d="M10 5c2 2 2 4 0 6M12 3c3 3 3 7 0 10" stroke="#fff" strokeWidth="1.200" />
        </Ico>
        <div className="ml-[11px] w-[62px] text-center font-['Noto_Sans',sans-serif] text-[12px] leading-[16px] tracking-[-0.400px] text-white">
          <div>5:55 PM</div>
          <div>9/15/2015</div>
        </div>
        <div className="ml-[6px] h-full w-[8px] border-l border-[#39485a] bg-[#4e6079]" />
      </div>
    </div>
  );
}

export default function App() {
  return (
    <div className="flex h-[763px] w-[1019px] flex-col overflow-hidden bg-[#fdfdfd] font-['Liberation_Sans',Arial,sans-serif]">
      <TitleBar />
      <TabStrip />
      <Ribbon />
      <div className="flex h-[525px] shrink-0">
        <ModelTree />
        <div className="relative flex-1">
          <Model />
          <ViewToolbar />
        </div>
      </div>
      <StatusBar />
      <Taskbar />
    </div>
  );
}
